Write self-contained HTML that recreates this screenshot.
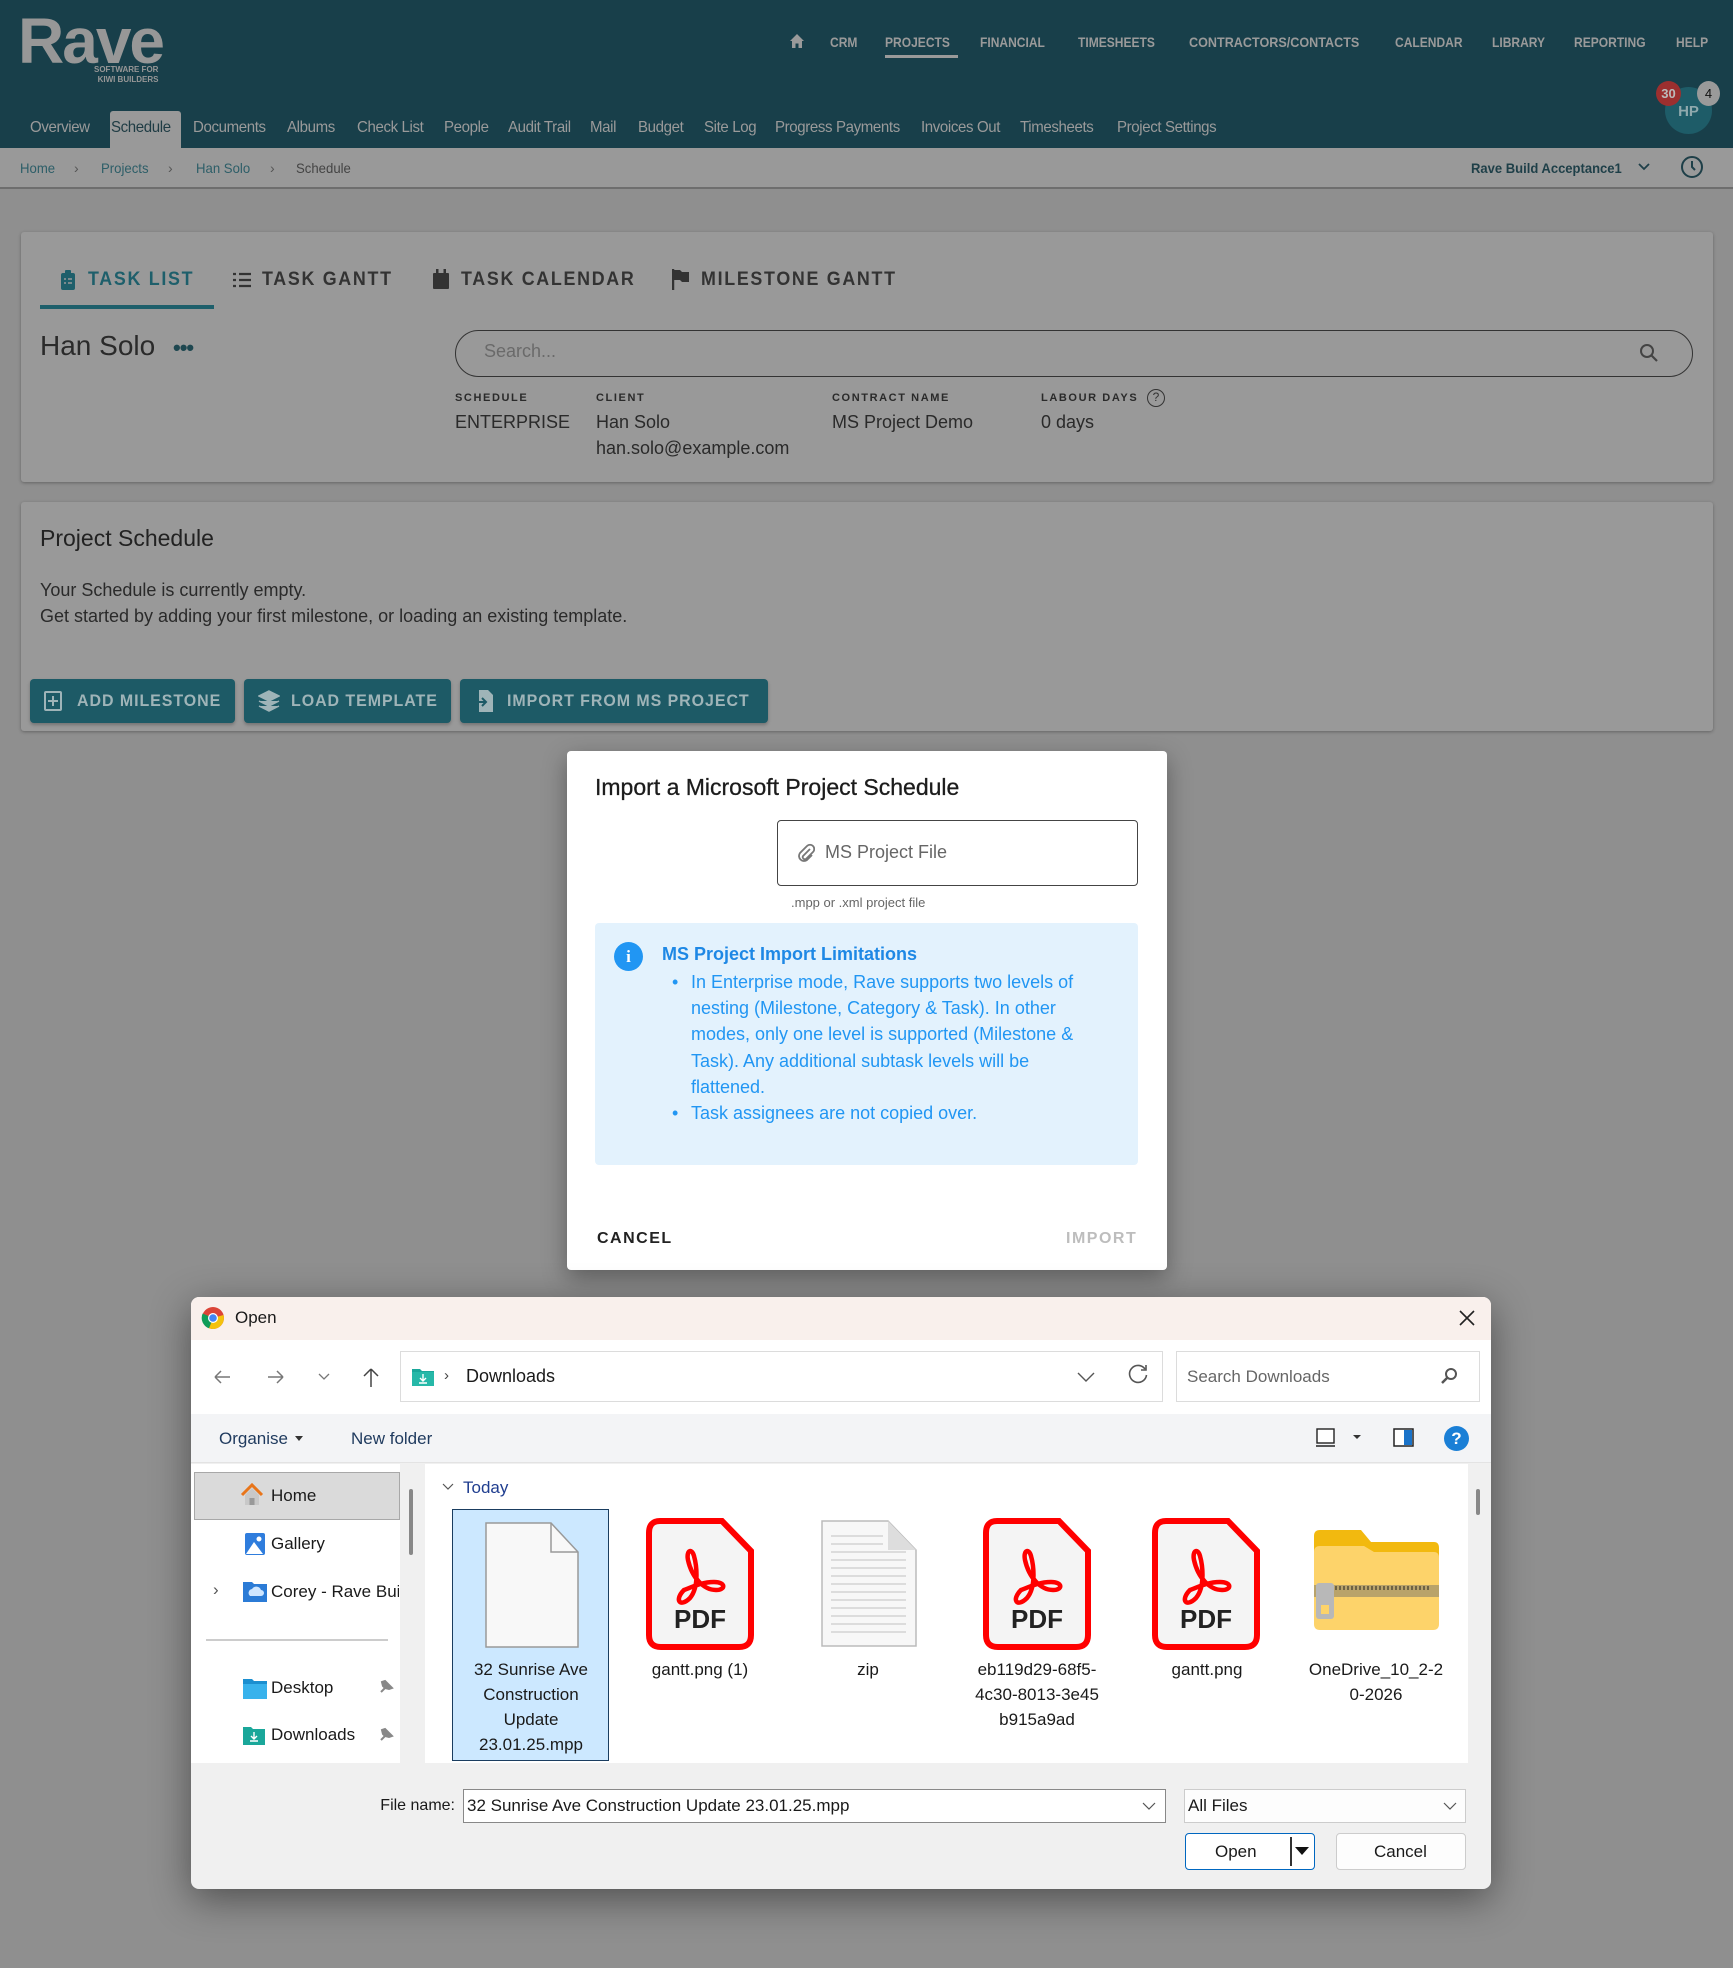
<!DOCTYPE html>
<html><head><meta charset="utf-8">
<style>
*{margin:0;padding:0;box-sizing:border-box}
body{width:1733px;height:1968px;background:#8f8f8f;font-family:"Liberation Sans",Arial,sans-serif;position:relative;overflow:hidden;color:#2a2a2a}
.a{position:absolute;white-space:nowrap}
.nx{transform:scaleX(.86);transform-origin:left center}
.nt{transform:scaleX(.94);transform-origin:left center}
.tn{color:#9a9a9a;font-weight:bold;font-size:14px;top:34px}
.sn{color:#9a9a9a;font-size:16px;top:119px;letter-spacing:-.4px}
.bc{font-size:14px;top:160px;color:#2d5e68}
.tab{font-size:19px;letter-spacing:1.8px;font-weight:bold;top:269px;color:#333}
.lbl{font-size:11px;font-weight:bold;letter-spacing:1.6px;top:392px;color:#2a2a2a}
.val{font-size:18px;top:412px;color:#2a2a2a}
.btn{position:absolute;top:679px;height:44px;background:#1d5a66;border-radius:4px;color:#9fb4b8;font-weight:bold;font-size:17px;letter-spacing:1px;line-height:44px;box-shadow:0 2px 3px rgba(0,0,0,.25)}
.fl{font-size:17px;color:#1a1a1a;text-align:center;line-height:25px;position:absolute;width:160px}
.nv{font-size:17px;color:#1a1a1a;position:absolute}
</style></head><body>

<!-- header -->
<div class="a" style="left:0;top:0;width:1733px;height:148px;background:#183f4a"></div>
<div class="a" style="left:18px;top:4px;font-size:64px;font-weight:bold;color:#979797;letter-spacing:-2px">Rave</div>
<div class="a" style="left:94px;top:65px;font-size:8px;font-weight:bold;color:#979797;line-height:10px;text-align:right">SOFTWARE FOR<br>KIWI BUILDERS</div>

<svg class="a" style="left:789px;top:33px" width="16" height="16" viewBox="0 0 16 16"><path d="M8 1 L1 8 H3 V15 H6.5 V10.5 H9.5 V15 H13 V8 H15 Z" fill="#9a9a9a"/></svg>
<div class="a tn nx" style="left:830px">CRM</div>
<div class="a tn nx" style="left:885px">PROJECTS</div>
<div class="a" style="left:885px;top:55px;width:73px;height:3px;background:#9a9a9a"></div>
<div class="a tn nx" style="left:980px">FINANCIAL</div>
<div class="a tn nx" style="left:1078px">TIMESHEETS</div>
<div class="a tn" style="left:1189px;transform:scaleX(.9);transform-origin:left">CONTRACTORS/CONTACTS</div>
<div class="a tn nx" style="left:1395px">CALENDAR</div>
<div class="a tn nx" style="left:1492px">LIBRARY</div>
<div class="a tn nx" style="left:1574px">REPORTING</div>
<div class="a tn nx" style="left:1676px">HELP</div>

<div class="a" style="left:110px;top:111px;width:71px;height:37px;background:#999;border-radius:3px 3px 0 0"></div>
<div class="a sn nt" style="left:30px">Overview</div>
<div class="a sn nt" style="left:111px;color:#1f3c44">Schedule</div>
<div class="a sn nt" style="left:193px">Documents</div>
<div class="a sn nt" style="left:287px">Albums</div>
<div class="a sn nt" style="left:357px">Check List</div>
<div class="a sn nt" style="left:444px">People</div>
<div class="a sn nt" style="left:508px">Audit Trail</div>
<div class="a sn nt" style="left:590px">Mail</div>
<div class="a sn nt" style="left:638px">Budget</div>
<div class="a sn nt" style="left:704px">Site Log</div>
<div class="a sn nt" style="left:775px">Progress Payments</div>
<div class="a sn nt" style="left:921px">Invoices Out</div>
<div class="a sn nt" style="left:1020px">Timesheets</div>
<div class="a sn nt" style="left:1117px">Project Settings</div>

<div class="a" style="left:1665px;top:87px;width:47px;height:47px;border-radius:50%;background:#1e5c68;color:#8fa9ad;font-weight:bold;font-size:15px;text-align:center;line-height:50px">HP</div>
<div class="a" style="left:1656px;top:81px;width:25px;height:25px;border-radius:50%;background:#9c2f2f;color:#bbb;font-weight:bold;font-size:13px;text-align:center;line-height:25px">30</div>
<div class="a" style="left:1697px;top:81px;width:23px;height:25px;border-radius:50%;background:#9a9a9a;color:#111;font-size:13px;text-align:center;line-height:25px">4</div>

<!-- breadcrumb -->
<div class="a" style="left:0;top:148px;width:1733px;height:41px;background:#999;border-bottom:2px solid #6e6e6e"></div>
<div class="a bc nt" style="left:20px">Home</div>
<div class="a bc" style="left:74px;color:#555">›</div>
<div class="a bc nt" style="left:101px">Projects</div>
<div class="a bc" style="left:168px;color:#555">›</div>
<div class="a bc nt" style="left:196px">Han Solo</div>
<div class="a bc" style="left:270px;color:#555">›</div>
<div class="a bc nt" style="left:296px;color:#444">Schedule</div>
<div class="a bc" style="left:1471px;font-weight:bold;color:#1e3f48;transform:scaleX(.93);transform-origin:left">Rave Build Acceptance1</div>
<svg class="a" style="left:1638px;top:162px" width="12" height="10"><path d="M1 2 L6 7 L11 2" stroke="#1e3f48" stroke-width="1.8" fill="none"/></svg>
<svg class="a" style="left:1680px;top:155px" width="24" height="24" viewBox="0 0 24 24"><circle cx="12" cy="12" r="10" stroke="#1e3f48" stroke-width="2" fill="none"/><path d="M12 6 V12 L15 15" stroke="#1e3f48" stroke-width="2" fill="none"/></svg>

<!-- card 1 -->
<div class="a" style="left:21px;top:232px;width:1692px;height:250px;background:#999;border-radius:3px;box-shadow:0 1px 3px rgba(0,0,0,.3)"></div>
<svg class="a" style="left:61px;top:270px" width="14" height="20" viewBox="0 0 14 20"><rect x="0" y="3" width="14" height="17" rx="2" fill="#1e5f6b"/><rect x="4" y="0" width="6" height="5" rx="1" fill="#1e5f6b"/><path d="M3 9h2M7 9h4M3 13h2M7 13h4" stroke="#999" stroke-width="1.5"/></svg>
<div class="a tab nt" style="left:88px;color:#1e5f6b">TASK LIST</div>
<div class="a" style="left:40px;top:305px;width:174px;height:4px;background:#1e5f6b"></div>
<svg class="a" style="left:233px;top:272px" width="18" height="16"><path d="M0 2h3M6 2h12M0 8h3M6 8h12M0 14h3M6 14h12" stroke="#333" stroke-width="2.2"/></svg>
<div class="a tab nt" style="left:262px">TASK GANTT</div>
<svg class="a" style="left:433px;top:269px" width="16" height="20"><rect x="0" y="4" width="16" height="16" rx="1" fill="#333"/><rect x="3" y="0" width="2.5" height="5" fill="#333"/><rect x="10.5" y="0" width="2.5" height="5" fill="#333"/></svg>
<div class="a tab nt" style="left:461px">TASK CALENDAR</div>
<svg class="a" style="left:672px;top:269px" width="18" height="21"><path d="M1 0 V21" stroke="#333" stroke-width="2.5"/><path d="M2 1 H8 L10 3 H17 V13 H10 L8 11 H2 Z" fill="#333"/></svg>
<div class="a tab nt" style="left:701px">MILESTONE GANTT</div>

<div class="a" style="left:40px;top:330px;font-size:28px;color:#2a2a2a">Han Solo</div>
<div class="a" style="left:173px;top:335px;font-size:22px;font-weight:bold;color:#1e4750;letter-spacing:-1px">•••</div>
<div class="a" style="left:455px;top:330px;width:1238px;height:47px;border:1.5px solid #333;border-radius:24px"></div>
<div class="a" style="left:484px;top:341px;font-size:18px;color:#6a6a6a">Search...</div>
<svg class="a" style="left:1639px;top:343px" width="20" height="20"><circle cx="8" cy="8" r="6" stroke="#444" stroke-width="2" fill="none"/><path d="M12.5 12.5 L18 18" stroke="#444" stroke-width="2.2"/></svg>
<div class="a lbl" style="left:455px">SCHEDULE</div>
<div class="a lbl" style="left:596px">CLIENT</div>
<div class="a lbl" style="left:832px">CONTRACT NAME</div>
<div class="a lbl" style="left:1041px">LABOUR DAYS</div>
<div class="a" style="left:1147px;top:389px;width:18px;height:18px;border:1.5px solid #333;border-radius:50%;font-size:12px;text-align:center;line-height:15px;color:#333">?</div>
<div class="a val" style="left:455px">ENTERPRISE</div>
<div class="a val" style="left:596px">Han Solo</div>
<div class="a val" style="left:596px;top:438px">han.solo@example.com</div>
<div class="a val" style="left:832px">MS Project Demo</div>
<div class="a val" style="left:1041px">0 days</div>

<!-- card 2 -->
<div class="a" style="left:21px;top:502px;width:1692px;height:229px;background:#999;border-radius:3px;box-shadow:0 1px 3px rgba(0,0,0,.3)"></div>
<div class="a" style="left:40px;top:525px;font-size:23px;color:#222">Project Schedule</div>
<div class="a" style="left:40px;top:580px;font-size:18px;color:#2a2a2a">Your Schedule is currently empty.</div>
<div class="a" style="left:40px;top:606px;font-size:18px;color:#2a2a2a">Get started by adding your first milestone, or loading an existing template.</div>
<div class="btn" style="left:30px;width:205px"><svg style="position:absolute;left:14px;top:12px" width="18" height="20"><rect x="1" y="1" width="16" height="18" rx="1" stroke="#9fb4b8" stroke-width="2" fill="none"/><path d="M9 5V15M4 10H14" stroke="#9fb4b8" stroke-width="2"/></svg><span style="position:absolute;left:47px" class="nt">ADD MILESTONE</span></div>
<div class="btn" style="left:244px;width:207px"><svg style="position:absolute;left:14px;top:11px" width="22" height="22"><path d="M11 1 L21 6 L11 11 L1 6Z M1 11 L11 16 L21 11 M1 16 L11 21 L21 16" fill="#9fb4b8" stroke="#9fb4b8" stroke-width="1.5"/></svg><span style="position:absolute;left:47px" class="nt">LOAD TEMPLATE</span></div>
<div class="btn" style="left:460px;width:308px"><svg style="position:absolute;left:14px;top:10px" width="20" height="24"><path d="M5 1 H14 L19 6 V23 H5 Z" fill="#9fb4b8"/><path d="M0 13 H11 M8 9 L12 13 L8 17" stroke="#1d5a66" stroke-width="2" fill="none"/></svg><span style="position:absolute;left:47px" class="nt">IMPORT FROM MS PROJECT</span></div>

<!-- import dialog -->
<div class="a" style="left:567px;top:751px;width:600px;height:519px;background:#fff;border-radius:4px;box-shadow:0 8px 24px rgba(0,0,0,.35)"></div>
<div class="a" style="left:595px;top:774px;font-size:23px;color:#1c1c1c;-webkit-text-stroke:.3px #1c1c1c">Import a Microsoft Project Schedule</div>
<div class="a" style="left:777px;top:820px;width:361px;height:66px;border:1px solid #444;border-radius:4px"></div>
<svg class="a" style="left:797px;top:843px" width="18" height="20" viewBox="0 0 18 20"><path d="M13 6 L6 13 a2.2 2.2 0 0 0 3 3 L16 9 a4 4 0 0 0 -6 -6 L3 10 a5 5 0 0 0 7 7 L15 12" stroke="#777" stroke-width="1.8" fill="none"/></svg>
<div class="a" style="left:825px;top:842px;font-size:18px;color:#666">MS Project File</div>
<div class="a" style="left:791px;top:895px;font-size:13px;color:#666">.mpp or .xml project file</div>
<div class="a" style="left:595px;top:923px;width:543px;height:242px;background:#e3f2fd;border-radius:4px"></div>
<div class="a" style="left:614px;top:942px;width:29px;height:29px;border-radius:50%;background:#2196f3;color:#fff;font-weight:bold;font-size:17px;text-align:center;line-height:29px;font-family:'Liberation Serif',serif">i</div>
<div class="a" style="left:662px;top:944px;font-size:18px;font-weight:bold;color:#1e88e5">MS Project Import Limitations</div>
<div class="a" style="left:672px;top:969px;font-size:18px;color:#2196f3;line-height:26.2px">•<br><br><br><br><br>•</div>
<div class="a" style="left:691px;top:969px;font-size:18px;color:#2196f3;line-height:26.2px">In Enterprise mode, Rave supports two levels of<br>nesting (Milestone, Category &amp; Task). In other<br>modes, only one level is supported (Milestone &amp;<br>Task). Any additional subtask levels will be<br>flattened.<br>Task assignees are not copied over.</div>
<div class="a" style="left:597px;top:1230px;font-size:16px;font-weight:bold;letter-spacing:1.5px;color:#222">CANCEL</div>
<div class="a" style="left:1066px;top:1230px;font-size:16px;font-weight:bold;letter-spacing:1.5px;color:#bdbdbd">IMPORT</div>

<!-- file dialog -->
<div class="a" style="left:191px;top:1297px;width:1300px;height:592px;background:#f0f0f0;border-radius:8px;box-shadow:0 10px 40px rgba(0,0,0,.45);overflow:hidden">
  <div class="a" style="left:0;top:0;width:1300px;height:43px;background:#f9f0ec"></div>
  <svg class="a" style="left:10px;top:9px" width="24" height="24" viewBox="0 0 24 24"><circle cx="12" cy="12" r="11" fill="#db4437"/><path d="M12 12 L22.5 9 A11 11 0 0 1 8 22.3Z" fill="#f4c20d"/><path d="M12 12 L8 22.3 A11 11 0 0 1 1.6 7.5Z" fill="#0f9d58"/><circle cx="12" cy="12" r="5" fill="#fff"/><circle cx="12" cy="12" r="3.8" fill="#4285f4"/></svg>
  <div class="a" style="left:44px;top:11px;font-size:17px;color:#1a1a1a">Open</div>
  <svg class="a" style="left:1267px;top:12px" width="18" height="18"><path d="M2 2L16 16M16 2L2 16" stroke="#222" stroke-width="1.6"/></svg>
  <div class="a" style="left:0;top:43px;width:1300px;height:74px;background:#fff"></div>
  <svg class="a" style="left:22px;top:70px" width="200" height="22"><path d="M2 10H17M2 10L8 4M2 10L8 16" stroke="#777" stroke-width="1.5" fill="none"/><path d="M55 10H70M70 10L64 4M70 10L64 16" stroke="#777" stroke-width="1.5" fill="none"/><path d="M106 7L111 12L116 7" stroke="#777" stroke-width="1.3" fill="none"/><path d="M158 2V20M158 2L151 9M158 2L165 9" stroke="#444" stroke-width="1.5" fill="none"/></svg>
  <div class="a" style="left:209px;top:54px;width:763px;height:51px;border:1px solid #dcdcdc;background:#fff"></div>
  <svg class="a" style="left:221px;top:69px" width="22" height="20"><path d="M0 3H8L10 5H22V20H0Z" fill="#1aa79a"/><path d="M0 6H22V20H0Z" fill="#26b8a8"/><path d="M11 8V15M8 12L11 15L14 12M7 17H15" stroke="#fff" stroke-width="1.4" fill="none"/></svg>
  <div class="a" style="left:253px;top:70px;font-size:15px;color:#444">›</div>
  <div class="a" style="left:275px;top:69px;font-size:18px;color:#1a1a1a">Downloads</div>
  <svg class="a" style="left:886px;top:74px" width="18" height="12"><path d="M1 2L9 10L17 2" stroke="#555" stroke-width="1.4" fill="none"/></svg>
  <svg class="a" style="left:936px;top:67px" width="22" height="22"><path d="M18 5A8.5 8.5 0 1 0 19.5 11" stroke="#555" stroke-width="1.6" fill="none"/><path d="M19 1V6H14" stroke="#555" stroke-width="1.6" fill="none"/></svg>
  <div class="a" style="left:985px;top:54px;width:304px;height:51px;border:1px solid #dcdcdc;background:#fff"></div>
  <div class="a" style="left:996px;top:70px;font-size:17px;color:#666">Search Downloads</div>
  <svg class="a" style="left:1249px;top:70px" width="18" height="18"><circle cx="11" cy="7" r="5" stroke="#555" stroke-width="2" fill="none"/><path d="M7.5 10.5L2 16" stroke="#555" stroke-width="2.5"/></svg>
  <div class="a" style="left:0;top:117px;width:1300px;height:49px;background:#f3f4f6;border-bottom:1px solid #e3e3e3"></div>
  <div class="a" style="left:28px;top:132px;font-size:17px;color:#1f3a5e">Organise</div>
  <svg class="a" style="left:104px;top:139px" width="8" height="6"><path d="M0 0H8L4 5Z" fill="#333"/></svg>
  <div class="a" style="left:160px;top:132px;font-size:17px;color:#1f3a5e">New folder</div>
  <svg class="a" style="left:1125px;top:130px" width="75" height="22"><rect x="1" y="2" width="17" height="14" stroke="#222" stroke-width="1.4" fill="#fff"/><path d="M0 19H19" stroke="#222" stroke-width="1.4"/><path d="M37 8H45L41 12Z" fill="#333"/></svg>
  <svg class="a" style="left:1202px;top:131px" width="22" height="20"><rect x="1" y="1" width="19" height="17" stroke="#222" stroke-width="1.5" fill="#fff"/><rect x="11" y="2" width="8" height="15" fill="#1a73c9"/></svg>
  <div class="a" style="left:1253px;top:129px;width:25px;height:25px;border-radius:50%;background:#1a7fd6;color:#fff;font-size:17px;text-align:center;line-height:25px;font-weight:bold">?</div>

  <div class="a" style="left:0;top:167px;width:209px;height:299px;background:#fff"></div>
  <div class="a" style="left:209px;top:167px;width:25px;height:299px;background:#f0f0f0"></div>
  <div class="a" style="left:218px;top:192px;width:4px;height:66px;background:#888;border-radius:2px"></div>
  <div class="a" style="left:234px;top:167px;width:1043px;height:299px;background:#fff"></div>
  <div class="a" style="left:1285px;top:192px;width:4px;height:26px;background:#888;border-radius:2px"></div>

  <div class="a" style="left:3px;top:175px;width:206px;height:48px;background:#dadada;border:1px solid #a8a8a8"></div>
  <svg class="a" style="left:49px;top:186px" width="24" height="24"><path d="M2 12L12 2L22 12" stroke="#e8751a" stroke-width="3" fill="none"/><path d="M5 12V22H19V12L12 5Z" fill="#c8c8c8"/><rect x="9.5" y="15" width="5" height="7" fill="#999"/></svg>
  <div class="nv" style="left:80px;top:189px">Home</div>
  <svg class="a" style="left:52px;top:235px" width="22" height="25"><rect x="2" y="1" width="20" height="22" rx="2" fill="#2f7ddd"/><path d="M3 22L11 10L20 22Z" fill="#fff"/><circle cx="16" cy="7" r="2.5" fill="#fff"/></svg>
  <div class="nv" style="left:80px;top:237px">Gallery</div>
  <div class="a" style="left:22px;top:283px;font-size:17px;color:#555">›</div>
  <svg class="a" style="left:52px;top:283px" width="24" height="22"><path d="M0 2H9L11 4H24V22H0Z" fill="#2b7bd6"/><path d="M7 16a4 4 0 0 1 2-7a5 5 0 0 1 9 1a3 3 0 0 1 0 6Z" fill="#cfe6ff"/></svg>
  <div class="nv" style="left:80px;top:285px;width:128px;overflow:hidden">Corey - Rave Builders</div>
  <div class="a" style="left:15px;top:342px;width:182px;height:1.5px;background:#ccc"></div>
  <svg class="a" style="left:52px;top:380px" width="24" height="22"><path d="M0 2H9L11 4H24V22H0Z" fill="#1b8fd0"/><path d="M0 7H24V22H0Z" fill="#38b2ec"/></svg>
  <div class="nv" style="left:80px;top:381px">Desktop</div>
  <svg class="a" style="left:104px;top:381px" width="100" height="16"><path d="M86 14L91 9M90 3L97 10L94 11L90 10L88 8L87 4Z" stroke="#888" stroke-width="2" fill="#888"/></svg>
  <svg class="a" style="left:52px;top:428px" width="22" height="20"><path d="M0 2H8L10 4H22V20H0Z" fill="#1aa79a"/><path d="M11 7V14M8 11L11 14L14 11M7 16H15" stroke="#fff" stroke-width="1.4" fill="none"/></svg>
  <div class="nv" style="left:80px;top:428px">Downloads</div>
  <svg class="a" style="left:104px;top:429px" width="100" height="16"><path d="M86 14L91 9M90 3L97 10L94 11L90 10L88 8L87 4Z" stroke="#888" stroke-width="2" fill="#888"/></svg>

  <svg class="a" style="left:251px;top:186px" width="12" height="8"><path d="M1 1L6 6L11 1" stroke="#555" stroke-width="1.2" fill="none"/></svg>
  <div class="a" style="left:272px;top:181px;font-size:17px;color:#1f3d8f">Today</div>

  <div class="a" style="left:261px;top:212px;width:157px;height:252px;background:#cce8ff;border:1px solid #1a3d60"></div>
  <svg class="a" style="left:294px;top:225px" width="95" height="126"><path d="M1 1H66L93 30V125H1Z" fill="#f8f8f8" stroke="#999" stroke-width="1.5"/><path d="M66 1V30H93" fill="none" stroke="#999" stroke-width="1.5"/></svg>
  <div class="fl" style="left:260px;top:360px">32 Sunrise Ave<br>Construction<br>Update<br>23.01.25.mpp</div>

  <svg class="a" style="left:455px;top:221px" width="108" height="132" viewBox="0 0 108 132"><path d="M14 3H76L105 33V117Q105 129 93 129H15Q3 129 3 117V15Q3 3 14 3Z" fill="#f4f4f4" stroke="#f00" stroke-width="6"/><path d="M38 72C28 82 34 90 44 80C54 68 50 45 48 38C46 30 40 32 42 42C46 60 58 72 70 72C80 72 80 64 68 64C55 64 44 70 38 72Z" stroke="#f00" stroke-width="4.5" fill="none"/><text x="54" y="110" font-family="Liberation Sans" font-weight="bold" font-size="26" text-anchor="middle" fill="#222">PDF</text></svg>
  <div class="fl" style="left:429px;top:360px">gantt.png (1)</div>

  <svg class="a" style="left:630px;top:223px" width="96" height="127"><path d="M1 1H67L95 30V126H1Z" fill="#f7f7f7" stroke="#bbb" stroke-width="1.5"/><path d="M67 1L95 30H67Z" fill="#ddd"/><g stroke="#ccc" stroke-width="1.2"><path d="M10 16H62M10 24H62M10 32H85M10 40H85M10 48H85M10 56H85M10 64H85M10 72H85M10 80H85M10 88H85M10 96H85M10 104H85M10 112H85"/></g></svg>
  <div class="fl" style="left:597px;top:360px">zip</div>

  <svg class="a" style="left:792px;top:221px" width="108" height="132" viewBox="0 0 108 132"><path d="M14 3H76L105 33V117Q105 129 93 129H15Q3 129 3 117V15Q3 3 14 3Z" fill="#f4f4f4" stroke="#f00" stroke-width="6"/><path d="M38 72C28 82 34 90 44 80C54 68 50 45 48 38C46 30 40 32 42 42C46 60 58 72 70 72C80 72 80 64 68 64C55 64 44 70 38 72Z" stroke="#f00" stroke-width="4.5" fill="none"/><text x="54" y="110" font-family="Liberation Sans" font-weight="bold" font-size="26" text-anchor="middle" fill="#222">PDF</text></svg>
  <div class="fl" style="left:766px;top:360px">eb119d29-68f5-<br>4c30-8013-3e45<br>b915a9ad</div>

  <svg class="a" style="left:961px;top:221px" width="108" height="132" viewBox="0 0 108 132"><path d="M14 3H76L105 33V117Q105 129 93 129H15Q3 129 3 117V15Q3 3 14 3Z" fill="#f4f4f4" stroke="#f00" stroke-width="6"/><path d="M38 72C28 82 34 90 44 80C54 68 50 45 48 38C46 30 40 32 42 42C46 60 58 72 70 72C80 72 80 64 68 64C55 64 44 70 38 72Z" stroke="#f00" stroke-width="4.5" fill="none"/><text x="54" y="110" font-family="Liberation Sans" font-weight="bold" font-size="26" text-anchor="middle" fill="#222">PDF</text></svg>
  <div class="fl" style="left:936px;top:360px">gantt.png</div>

  <svg class="a" style="left:1120px;top:233px" width="130" height="102"><path d="M3 6Q3 0 9 0H50L60 12H123Q128 12 128 18V30H3Z" fill="#f2b90f"/><path d="M3 22Q3 16 9 16H53L63 22H123Q128 22 128 28V94Q128 100 122 100H9Q3 100 3 94Z" fill="#fdd36a"/><rect x="3" y="55" width="125" height="12" fill="#b9a36a"/><path d="M20 58h100" stroke="#6d6245" stroke-width="4" stroke-dasharray="2 2"/><rect x="5" y="53" width="18" height="36" rx="3" fill="#b8b8b8"/><rect x="10" y="75" width="8" height="9" fill="#fdd36a"/></svg>
  <div class="fl" style="left:1105px;top:360px">OneDrive_10_2-2<br>0-2026</div>

  <div class="a" style="right:1036px;top:500px;font-size:16px;color:#1a1a1a">File name:</div>
  <div class="a" style="left:272px;top:492px;width:703px;height:34px;background:#fff;border:1px solid #888"></div>
  <div class="a" style="left:276px;top:499px;font-size:17px;color:#1a1a1a">32 Sunrise Ave Construction Update 23.01.25.mpp</div>
  <svg class="a" style="left:951px;top:505px" width="14" height="9"><path d="M1 1L7 7L13 1" stroke="#555" stroke-width="1.2" fill="none"/></svg>
  <div class="a" style="left:993px;top:492px;width:282px;height:34px;background:#fdfdfd;border:1px solid #ccc"></div>
  <div class="a" style="left:997px;top:499px;font-size:17px;color:#1a1a1a">All Files</div>
  <svg class="a" style="left:1252px;top:505px" width="14" height="9"><path d="M1 1L7 7L13 1" stroke="#555" stroke-width="1.2" fill="none"/></svg>
  <div class="a" style="left:994px;top:536px;width:130px;height:37px;background:#fff;border:1.5px solid #0067c0;border-radius:4px"></div>
  <div class="a" style="left:1024px;top:545px;font-size:17px;color:#1a1a1a">Open</div>
  <div class="a" style="left:1099px;top:540px;width:1.5px;height:29px;background:#333"></div>
  <svg class="a" style="left:1104px;top:550px" width="14" height="9"><path d="M0 0H14L7 8Z" fill="#111"/></svg>
  <div class="a" style="left:1145px;top:536px;width:130px;height:37px;background:#fdfdfd;border:1px solid #ccc;border-radius:4px"></div>
  <div class="a" style="left:1183px;top:545px;font-size:17px;color:#1a1a1a">Cancel</div>
</div>
</body></html>
